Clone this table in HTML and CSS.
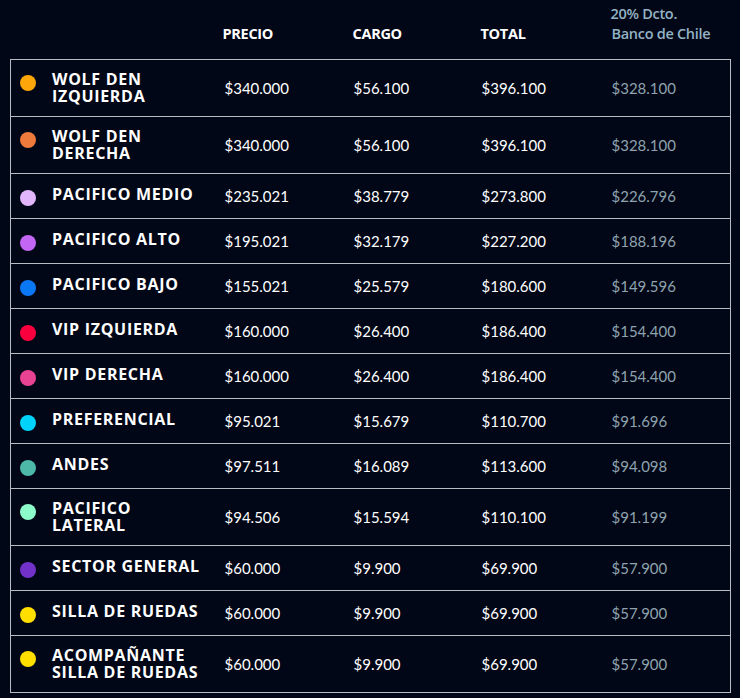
FILE: index.html
```html
<!DOCTYPE html>
<html lang="es">
<head>
<meta charset="utf-8">
<title>Precios</title>
<link rel="stylesheet" href="styles.css">
</head>
<body>
<table class="prices">
  <thead>
    <tr>
      <th class="c-name"></th>
      <th class="c-num">PRECIO</th>
      <th class="c-num">CARGO</th>
      <th class="c-num">TOTAL</th>
      <th class="c-disc">20% Dcto.<br>Banco de Chile</th>
    </tr>
  </thead>
  <tbody>
    <tr><td class="name"><div class="nm"><span class="dot d1"></span><span class="lbl">WOLF DEN<br>IZQUIERDA</span></div></td><td>$340.000</td><td>$56.100</td><td>$396.100</td><td class="disc">$328.100</td></tr>
    <tr><td class="name"><div class="nm"><span class="dot d2"></span><span class="lbl">WOLF DEN<br>DERECHA</span></div></td><td>$340.000</td><td>$56.100</td><td>$396.100</td><td class="disc">$328.100</td></tr>
    <tr><td class="name"><div class="nm"><span class="dot d3"></span><span class="lbl">PACIFICO MEDIO</span></div></td><td>$235.021</td><td>$38.779</td><td>$273.800</td><td class="disc">$226.796</td></tr>
    <tr><td class="name"><div class="nm"><span class="dot d4"></span><span class="lbl">PACIFICO ALTO</span></div></td><td>$195.021</td><td>$32.179</td><td>$227.200</td><td class="disc">$188.196</td></tr>
    <tr><td class="name"><div class="nm"><span class="dot d5"></span><span class="lbl">PACIFICO BAJO</span></div></td><td>$155.021</td><td>$25.579</td><td>$180.600</td><td class="disc">$149.596</td></tr>
    <tr><td class="name"><div class="nm"><span class="dot d6"></span><span class="lbl">VIP IZQUIERDA</span></div></td><td>$160.000</td><td>$26.400</td><td>$186.400</td><td class="disc">$154.400</td></tr>
    <tr><td class="name"><div class="nm"><span class="dot d7"></span><span class="lbl">VIP DERECHA</span></div></td><td>$160.000</td><td>$26.400</td><td>$186.400</td><td class="disc">$154.400</td></tr>
    <tr><td class="name"><div class="nm"><span class="dot d8"></span><span class="lbl">PREFERENCIAL</span></div></td><td>$95.021</td><td>$15.679</td><td>$110.700</td><td class="disc">$91.696</td></tr>
    <tr><td class="name"><div class="nm"><span class="dot d9"></span><span class="lbl">ANDES</span></div></td><td>$97.511</td><td>$16.089</td><td>$113.600</td><td class="disc">$94.098</td></tr>
    <tr><td class="name"><div class="nm"><span class="dot d10"></span><span class="lbl">PACIFICO<br>LATERAL</span></div></td><td>$94.506</td><td>$15.594</td><td>$110.100</td><td class="disc">$91.199</td></tr>
    <tr><td class="name"><div class="nm"><span class="dot d11"></span><span class="lbl">SECTOR GENERAL</span></div></td><td>$60.000</td><td>$9.900</td><td>$69.900</td><td class="disc">$57.900</td></tr>
    <tr><td class="name"><div class="nm"><span class="dot d12"></span><span class="lbl">SILLA DE RUEDAS</span></div></td><td>$60.000</td><td>$9.900</td><td>$69.900</td><td class="disc">$57.900</td></tr>
    <tr><td class="name"><div class="nm"><span class="dot d12"></span><span class="lbl">ACOMPAÑANTE<br>SILLA DE RUEDAS</span></div></td><td>$60.000</td><td>$9.900</td><td>$69.900</td><td class="disc">$57.900</td></tr>
  </tbody>
</table>
</body>
</html>
```

FILE: styles.css
```css
html, body {
  margin: 0;
  padding: 0;
  background: #020717;
}
body {
  padding: 0 10px 0 10px;
}
.prices {
  border-collapse: collapse;
  width: 721px;
  table-layout: fixed;
  color: #ffffff;
}
.prices th {
  font-family: "Open Sans", sans-serif;
  font-weight: 700;
  font-size: 14.5px;
  line-height: 20px;
  text-align: left;
  vertical-align: bottom;
  padding: 0 0 15px 0;
  height: 44px;
  letter-spacing: -0.3px;
}
.prices th.c-name { width: 214px; }
.prices th.c-num { padding-left: 0; }
.prices th.c-num:nth-child(2) { width: 129px; text-indent: -2px; }
.prices th.c-num:nth-child(3) { width: 128px; text-indent: -1px; }
.prices th.c-num:nth-child(4) { width: 130px; text-indent: -1px; }
.prices th.c-disc {
  color: #93b3c4;
  font-weight: 600;
  text-indent: -1px;
}
.prices tbody tr {
  border: 1px solid #b9bcc2;
}
.prices td {
  font-family: Lato, sans-serif;
  font-size: 15px;
  line-height: 22px;
  padding: 11px 0;
  vertical-align: middle;
}
.prices td.disc {
  color: #8ea3ae;
}
.nm {
  display: flex;
  align-items: flex-start;
  padding-left: 9px;
}
.lbl {
  font-family: "Open Sans", sans-serif;
  font-weight: 700;
  font-size: 16px;
  line-height: 17px;
  letter-spacing: 0.7px;
}
.dot {
  flex: none;
  width: 16px;
  height: 16px;
  border-radius: 50%;
  margin-top: 4px;
  margin-right: 16px;
}
.d1 { background: #ffa60a; }
.d2 { background: #ee7a3b; }
.d3 { background: #e2b6fb; }
.d4 { background: #c466f4; }
.d5 { background: #0a78f5; }
.d6 { background: #fa003c; }
.d7 { background: #e84293; }
.d8 { background: #00d2fa; }
.d9 { background: #4db8a8; }
.d10 { background: #8dfccb; }
.d11 { background: #7232c9; }
.d12 { background: #ffdf00; }
```
